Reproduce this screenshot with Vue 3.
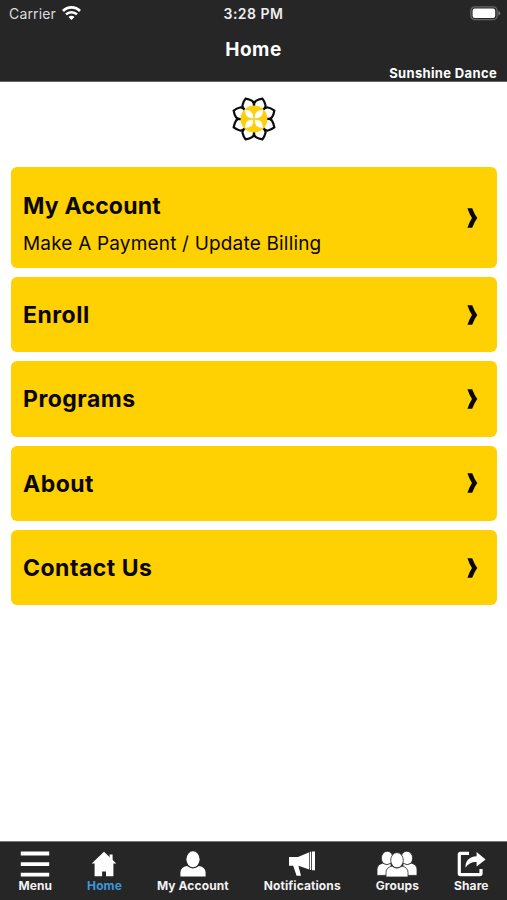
<script setup>
const cards = [
    { title: 'My Account', sub: 'Make A Payment / Update Billing' },
    { title: 'Enroll' },
    { title: 'Programs' },
    { title: 'About' },
    { title: 'Contact Us' },
];

const tabs = [
    { name: 'menu', label: 'Menu' },
    { name: 'home', label: 'Home', active: true },
    { name: 'account', label: 'My Account' },
    { name: 'notifications', label: 'Notifications' },
    { name: 'groups', label: 'Groups' },
    { name: 'share', label: 'Share' },
];

// angles of the flower's petals
const petals = [22.5, 67.5, 112.5, 157.5, 202.5, 247.5, 292.5, 337.5];
const leaves = [45, 135, 225, 315];
</script>

<template>
    <div class="screen">
        <header class="header">
            <div class="status">
                <div class="carrier">
                    <span>Carrier</span>
                    <svg class="wifi" width="19" height="14" viewBox="0 0 19 14">
                        <path d="M1 5 A12 12 0 0 1 18 5" fill="none" stroke="#fff" stroke-width="2.8" />
                        <path d="M4 8.4 A7.8 7.8 0 0 1 15 8.4" fill="none" stroke="#fff" stroke-width="2.5" />
                        <path d="M9.5 14 L6.5 11 A4.2 4.2 0 0 1 12.5 11 Z" fill="#fff" />
                    </svg>
                </div>
                <div class="time">3:28 PM</div>
                <div class="battery">
                    <svg width="31" height="15" viewBox="0 0 31 15">
                        <rect x="0.9" y="0.9" width="26.2" height="12.8" rx="4" fill="none" stroke="#666" stroke-width="1.3" />
                        <rect x="2.6" y="2.6" width="22.6" height="9.4" rx="2.2" fill="#fff" />
                        <path d="M28.4 5 Q30.2 5.6 30.2 7.3 Q30.2 9 28.4 9.6 Z" fill="#777" />
                    </svg>
                </div>
            </div>
            <h1 class="title">Home</h1>
            <div class="studio">Sunshine Dance</div>
        </header>

        <main class="content">
            <svg class="logo" width="48" height="48" viewBox="-24 -24 48 48">
                <g fill="#fff" stroke="#0a0a0a" stroke-width="2.2" stroke-linejoin="miter">
                    <path v-for="a in petals" :key="a" :transform="`rotate(${a})`" d="M-5 -12 Q-6.6 -15.5 -5.2 -17.4 Q-3.4 -20 0 -22 Q3.4 -20 5.2 -17.4 Q6.6 -15.5 5 -12" />
                </g>
                <circle r="13.4" fill="#fdd00b" />
                <path v-for="a in leaves" :key="a" :transform="`rotate(${a})`" d="M0 -1.2 Q-6.4 -6.5 0 -12.6 Q6.4 -6.5 0 -1.2 Z" fill="#fff" />
            </svg>

            <div class="cards">
                <a v-for="card in cards" :key="card.title" class="card" :class="{ tall: card.sub }">
                    <div class="card-text">
                        <div class="card-title">{{ card.title }}</div>
                        <div v-if="card.sub" class="card-sub">{{ card.sub }}</div>
                    </div>
                    <svg class="arrow" width="11" height="20" viewBox="0 0 11 20">
                        <path d="M0.4 0.3 H5.2 Q7.4 6.2 10.3 10 Q7.4 13.8 5.2 19.7 H0.4 Q2.4 13.8 5 10 Q2.4 6.2 0.4 0.3 Z" fill="#0a0700" />
                    </svg>
                </a>
            </div>
        </main>

        <nav class="tabbar">
            <a v-for="tab in tabs" :key="tab.name" class="tab" :class="{ active: tab.active }">
                <svg v-if="tab.name === 'menu'" width="30" height="26" viewBox="0 0 30 26">
                    <path d="M0.8 0.6 H29.2 V4.4 H0.8 Z M0.8 11.2 H29.2 V15 H0.8 Z M0.8 21.8 H29.2 V25.6 H0.8 Z" fill="#fff" />
                </svg>
                <svg v-else-if="tab.name === 'home'" width="26" height="26" viewBox="0 0 26 26">
                    <path d="M13 0.8 L25.3 12.6 H22.4 V25.3 H15 V20.4 H11.1 V25.3 H3.6 V12.6 H0.7 Z" fill="#fff" />
                    <path d="M18.6 3.4 H21.6 V10 L18.6 7 Z" fill="#fff" />
                </svg>
                <svg v-else-if="tab.name === 'account'" width="26" height="26" viewBox="0 0 26 26">
                    <ellipse cx="13" cy="8.3" rx="6.6" ry="8" fill="#fff" />
                    <path d="M0.4 25.5 V21.5 Q0.6 16.2 7 15 Q13 19.8 19 15 Q25.4 16.2 25.6 21.5 V25.5 Z" fill="#fff" />
                </svg>
                <svg v-else-if="tab.name === 'notifications'" width="28" height="26" viewBox="0 0 28 26">
                    <path d="M1 6 H10 L21.3 1.2 V18.5 L10.4 14.8 L13 24.8 H8.6 L5.2 14.8 H1 Z M22 0.8 H23.2 V19 H22 Z M24 0.4 H27 V19.2 H24 Z" fill="#fff" />
                </svg>
                <svg v-else-if="tab.name === 'groups'" class="groups" width="40" height="26" viewBox="0 0 40 26">
                    <g fill="#fff" stroke="#262626" stroke-width="0.8">
                        <ellipse cx="10.2" cy="7.2" rx="5.8" ry="7" />
                        <ellipse cx="29.8" cy="7.2" rx="5.8" ry="7" />
                        <path d="M0 24.4 V18.6 Q0 13.6 5.5 12.2 Q10 15.1 14 12.2 V24.4 Z" />
                        <path d="M40 24.4 V18.6 Q40 13.6 34.5 12.2 Q30 15.1 26 12.2 V24.4 Z" />
                        <path d="M9 26 V21.5 Q9 16.5 15 15 Q20 19 25 15 Q31 16.5 31 21.5 V26 Z" />
                        <ellipse cx="20" cy="9.2" rx="6.3" ry="7.6" />
                    </g>
                </svg>
                <svg v-else width="29" height="26" viewBox="0 0 29 26">
                    <path d="M12 2.3 H3.4 Q2.3 2.3 2.3 3.4 V22.6 Q2.3 23.7 3.4 23.7 H22.9 Q24 23.7 24 22.6 V18" fill="none" stroke="#fff" stroke-width="3.2" />
                    <path d="M8.4 16.8 Q8.4 5.8 19.6 5.2 V1 L28.6 8.4 L19.6 15.4 V11 Q12.4 10.6 8.4 16.8 Z" fill="#fff" />
                </svg>
                <span class="tab-label">{{ tab.label }}</span>
            </a>
        </nav>
    </div>
</template>

<style>
body {
    margin: 0;
    background: #fff;
}
</style>

<style scoped>
.screen {
    display: flex;
    flex-direction: column;
    width: 507px;
    height: 900px;
    overflow: hidden;
    background: #fff;
    font-family: Inter, "Liberation Sans", sans-serif;
}

.header {
    box-sizing: border-box;
    height: 82px;
    background: #262626;
    border-bottom: 1px solid #666;
    color: #fff;
}

.status {
    display: grid;
    grid-template-columns: 1fr auto 1fr;
    align-items: center;
    height: 27px;
    padding: 0 6px 0 9px;
    font-size: 14px;
}

.carrier {
    display: flex;
    align-items: center;
    gap: 6px;
    color: #ddd;
    letter-spacing: 0.15px;
}

.wifi {
    margin-top: -2px;
}

.time {
    margin-left: -3px;
    font-weight: 600;
    letter-spacing: 0.5px;
    color: #eee;
}

.battery {
    display: flex;
    justify-content: flex-end;
    margin-top: -1px;
}

.title {
    margin: 10px 0 0;
    padding-top: 1px;
    font-size: 19px;
    line-height: 24px;
    font-weight: 700;
    letter-spacing: 0.5px;
    text-align: center;
}

.studio {
    margin: 3px 10px 0 0;
    font-size: 13px;
    line-height: 16px;
    font-weight: 700;
    letter-spacing: 0.35px;
    text-align: right;
}

.content {
    display: flex;
    flex-direction: column;
    flex: 1;
}

.logo {
    align-self: center;
    margin: 13px 0 24px;
}

.cards {
    display: flex;
    flex-direction: column;
    gap: 9px;
    padding: 0 10px 0 11px;
}

.card {
    display: flex;
    align-items: center;
    justify-content: space-between;
    box-sizing: border-box;
    height: 75.3px;
    padding: 0 19px 0 12px;
    border-radius: 6px;
    background: #ffd002;
    color: #0a0700;
}

.card.tall {
    height: 101px;
}

.card-title {
    padding-top: 1px;
    font-size: 23px;
    line-height: 30px;
    font-weight: 700;
    letter-spacing: 0.5px;
}

.tall .card-title {
    margin-top: 13px;
    letter-spacing: 0.2px;
}

.card-sub {
    margin-top: 8px;
    font-size: 19px;
    line-height: 30px;
    letter-spacing: 0.18px;
}

.tabbar {
    display: flex;
    justify-content: center;
    gap: 35px;
    box-sizing: border-box;
    height: 59px;
    padding-top: 9px;
    border-top: 1px solid #777;
    background: #262626;
}

.tab {
    display: flex;
    flex-direction: column;
    align-items: center;
    color: #f2f2f2;
}

.tab.active {
    color: #3f97dc;
}

.groups {
    margin-left: -1px;
}

.tab-label {
    margin-top: 1px;
    font-size: 12px;
    line-height: 15px;
    font-weight: 700;
    letter-spacing: 0.1px;
}
</style>
